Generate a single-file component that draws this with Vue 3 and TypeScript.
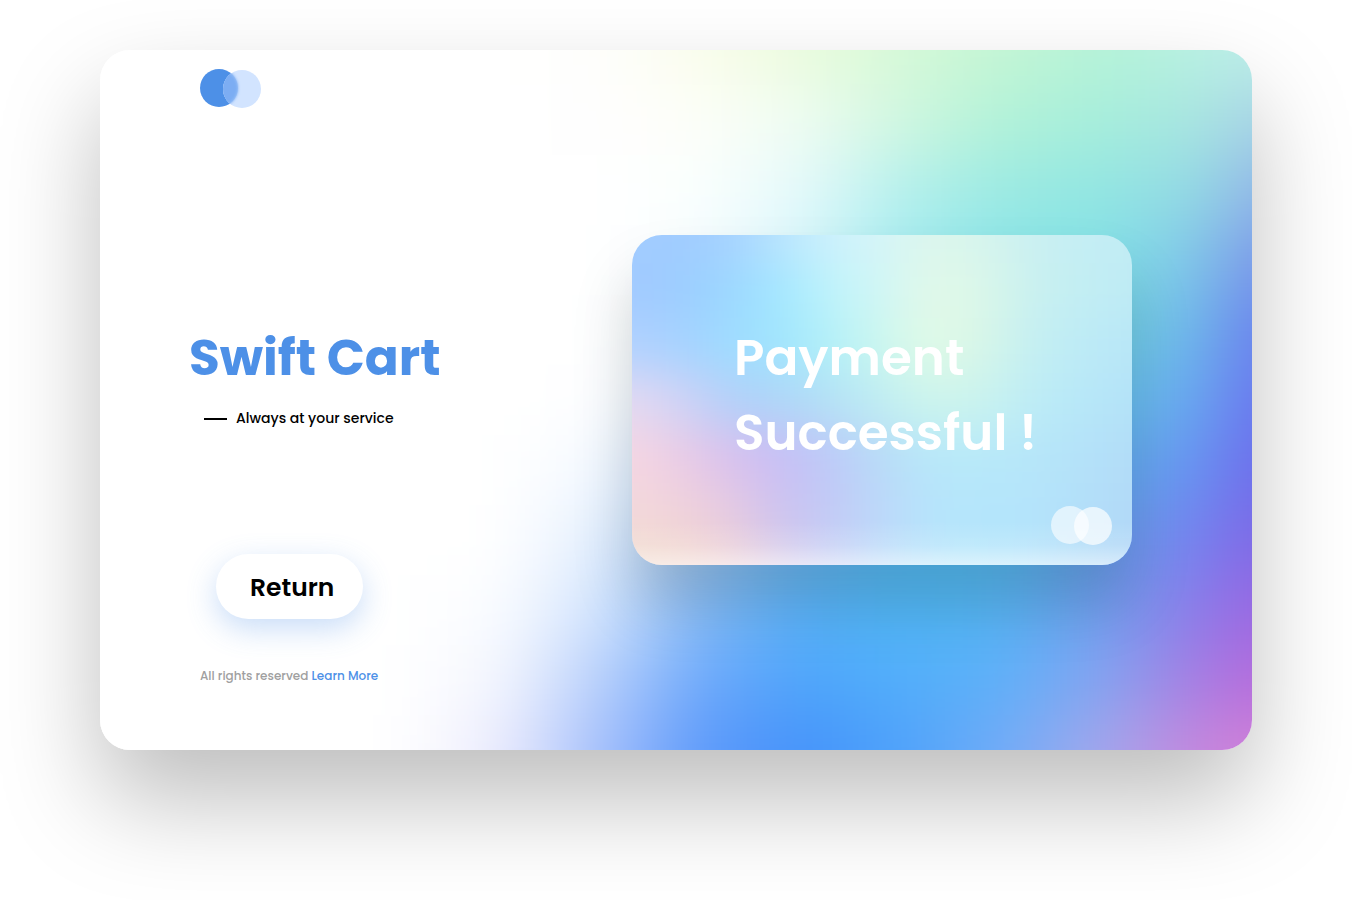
<script setup lang="ts">
interface Mesh {
  bleed: number
  stops: number[]
  rows: string[]
}

// Each row lists the colours of one horizontal band, from left to right.
const panelMesh: Mesh = {
  bleed: 10,
  stops: [26, 34.7, 43.4, 52.1, 60.8, 69.4, 78.1, 86.8, 95.5, 100, 104],
  rows: [
    'ffffff ffffff fefefc fafdec ebfbdd d6f9d8 c4f5d4 b5f3d8 b8f0e2 bdede8 bdede8',
    'ffffff ffffff fefefe fdfef8 effcf2 d1f7e0 b2f2d8 a6eedb a8e5e1 a8d4e6 a8d4e6',
    'ffffff ffffff ffffff fafffe e5f9fb b6f0ed 9ceae2 92e6e2 94d9e4 92b6e8 92b6e8',
    'ffffff ffffff ffffff f6fcfe d6f5fb a4ebf0 8ae4e8 82e2e6 80c4e8 7c98ea 7c98ea',
    'ffffff ffffff ffffff eaf6fc b8e8f8 88dcee 74dce8 74dae6 6eb4ea 6b82ee 6b82ee',
    'ffffff ffffff fefeff dcedfc 98d2f8 70c8f2 60c8f0 68caee 68a4f0 6a76ee 6a76ee',
    'ffffff ffffff f4f9ff bcdafa 7cc0f8 5cc0f6 58c4f6 62b4f2 6890f0 6f6cec 6f6cec',
    'ffffff ffffff e4effe a4cef9 70bef8 58c4fa 58c4f6 68a4f2 7680ee 8068e6 8068e6',
    'ffffff fafcff d2e3fd 86bcfa 58b2fa 50b8f8 56b6f6 72a0f0 8e7ae8 9a68e2 9a68e2',
    'ffffff f4f6fe b8cffb 6ea8fa 4ea4fa 52aefa 5eb0f8 84a4f0 a87ce2 b66cdc b66cdc',
    'ffffff ebebfd a6c0fb 5e9afa 4592fa 4ea2fa 70acf8 a4a8ec c686dc d080d8 d080d8',
  ],
}

const cardMesh: Mesh = {
  bleed: 10,
  stops: [0, 10, 20, 30, 40, 50, 60, 70, 80, 90, 100],
  rows: [
    'a2ccff a0ccff a6d2ff bae6fe cdf2fc d5f5f8 dcf7ec d6f5ee caf0f1 c4eef4 c2ecf4',
    'a2caff 9ccdff 9cd8ff a4e8ff c0f3fb d1f6f5 e2f9e8 dbf7e9 c9f0f0 c2eef3 beebf5',
    'b2d2ff a6d2ff 9edcff a0e6fd b4f1f8 ccf7ee e2fae6 d7f6e8 c4eff2 bdebf6 b8e6f8',
    'e4daf2 d0d2f6 b2d0fa aed6f8 b4e2f6 c0eef2 cef6ec caf3ee bdecf6 b7e8f8 b3e2f8',
    'f6d6e2 eacce6 d8c0ee c8bef6 bccaf8 b8dcf8 b8e9f9 b8e9f9 b6e6f9 b4e2f9 b2dcf8',
    'f3d9dc f0d2da e6cae2 ccc2f0 c2caf6 bcd8fa b6e4fb b4e6fb b4e4fb b3dff9 b2d9f8',
    'f0dccc f2d8cc eed0d4 d8ccea c8d2f6 bedefa b8e6fb b5e6fb b5e4fb b3dcf8 b2d6f7',
  ],
}

function bands(mesh: Mesh): string[] {
  const { rows, stops, bleed } = mesh
  const span = 100 + bleed * 2
  const extended = [rows[0], ...rows, rows[rows.length - 1]]
  return extended.map((row) => {
    const colours = row
      .split(' ')
      .map((hex, i) => `#${hex} ${(((stops[i] + bleed) / span) * 100).toFixed(2)}%`)
    return `linear-gradient(to right, ${colours.join(', ')})`
  })
}

function frame(mesh: Mesh) {
  const steps = mesh.rows.length - 1
  return {
    top: `${-150 / steps}%`,
    height: `${((mesh.rows.length + 2) / steps) * 100}%`,
    left: `${-mesh.bleed}%`,
    width: `${100 + mesh.bleed * 2}%`,
  }
}

const panelBands = bands(panelMesh)
const cardBands = bands(cardMesh)
const title: string[] = ['Payment', 'Successful !']
</script>

<template>
  <div class="page">
    <main class="panel">
      <div class="mesh" :style="frame(panelMesh)" aria-hidden="true">
        <i v-for="(b, i) in panelBands" :key="i" class="band" :style="{ background: b }"></i>
      </div>

      <section class="intro">
        <svg class="logo" width="61" height="39" viewBox="0 0 61 39" role="img" aria-label="Swift Cart logo">
          <defs>
            <clipPath id="lens"><circle cx="42" cy="20" r="19" /></clipPath>
            <clipPath id="disc"><circle cx="19" cy="19" r="19" /></clipPath>
            <filter id="soften" x="-20%" y="-20%" width="140%" height="140%">
              <feGaussianBlur stdDeviation="1.5" />
            </filter>
          </defs>
          <circle cx="19" cy="19" r="19" fill="#4d90e7" />
          <circle cx="42" cy="20" r="19" fill="#d2e4ff" />
          <g clip-path="url(#disc)">
            <circle cx="42" cy="20" r="19" fill="#a7c9f9" />
          </g>
          <g clip-path="url(#lens)">
            <circle cx="19" cy="19" r="19" fill="#7badf3" filter="url(#soften)" />
          </g>
        </svg>

        <h1 class="brand">Swift Cart</h1>
        <p class="tagline"><span class="dash"></span>Always at your service</p>
        <button class="return" type="button">Return</button>
        <p class="legal">All rights reserved <a href="#">Learn More</a></p>
      </section>

      <section class="card">
        <div class="card-face" aria-hidden="true">
          <div class="mesh card-mesh" :style="frame(cardMesh)">
            <i v-for="(b, i) in cardBands" :key="i" class="band" :style="{ background: b }"></i>
          </div>
          <div class="shine"></div>
        </div>
        <h2 class="status">
          <span v-for="line in title" :key="line">{{ line }}</span>
        </h2>
        <svg class="card-logo" width="61" height="39" viewBox="0 0 61 39" aria-hidden="true">
          <circle cx="19" cy="19" r="19" fill="#fff" fill-opacity="0.6" />
          <circle cx="42" cy="20" r="19" fill="#fff" fill-opacity="0.7" />
        </svg>
      </section>
    </main>
  </div>
</template>

<style>
body {
  margin: 0;
  background: #fff;
}
</style>

<style scoped>
.page {
  box-sizing: border-box;
  min-height: 100vh;
  padding: 50px 100px 150px;
  display: flex;
  overflow: hidden;
  font-family: Poppins, Inter, 'Open Sans', sans-serif;
  color: #000;
}

.panel {
  position: relative;
  flex: 1;
  display: flex;
  align-items: center;
  justify-content: space-between;
  padding-right: 120px;
  border-radius: 30px;
  box-shadow: 0 50px 100px rgba(0, 0, 0, 0.26);
  background: #fff;
  overflow: hidden;
}

.mesh {
  position: absolute;
  display: flex;
  flex-direction: column;
  filter: blur(30px);
}

.card-mesh {
  filter: blur(22px);
}

.band {
  flex: 1;
}

.intro {
  position: relative;
  align-self: stretch;
  display: flex;
  flex-direction: column;
  align-items: flex-start;
  padding: 19px 0 64px 89px;
}

.logo {
  display: block;
  margin-left: 11px;
}

.brand {
  margin: 212px 0 0;
  font-size: 50px;
  line-height: 75px;
  font-weight: 700;
  color: #4d90e7;
}

.tagline {
  display: flex;
  align-items: center;
  gap: 9px;
  margin: 13px 0 0 15px;
  font-size: 14px;
  line-height: 21px;
  font-weight: 500;
}

.dash {
  width: 23px;
  height: 2px;
  background: #000;
}

.return {
  margin: 125px 0 0 27px;
  padding: 2px 29px 0 34px;
  height: 65px;
  border: 0;
  border-radius: 33px;
  background: #fff;
  box-shadow: 0 10px 30px rgba(77, 144, 231, 0.3);
  font: inherit;
  font-size: 25px;
  font-weight: 600;
  color: inherit;
  cursor: pointer;
}

.legal {
  margin: 48px 0 0 11px;
  font-size: 12px;
  line-height: 18px;
  font-weight: 500;
  color: #a0a0a0;
}

.legal a {
  color: #4d90e7;
  text-decoration: none;
}

.card {
  position: relative;
  flex: 0 1 500px;
  min-height: 330px;
  display: flex;
  align-items: center;
  justify-content: center;
  border-radius: 30px;
  box-shadow: 0 40px 60px rgba(0, 0, 0, 0.17);
}

.card-face {
  position: absolute;
  inset: 0;
  border-radius: 30px;
  overflow: hidden;
}

.shine {
  position: absolute;
  inset: 0;
  background: linear-gradient(to top, rgba(255, 255, 255, 0.5), rgba(255, 255, 255, 0.15) 6%, rgba(255, 255, 255, 0) 13%);
}

.status {
  position: relative;
  display: flex;
  flex-direction: column;
  margin: 0;
  padding: 0 0 10px 7px;
  font-size: 50px;
  line-height: 75px;
  font-weight: 600;
  color: #fff;
}

.card-logo {
  position: absolute;
  right: 20px;
  bottom: 20px;
}
</style>
